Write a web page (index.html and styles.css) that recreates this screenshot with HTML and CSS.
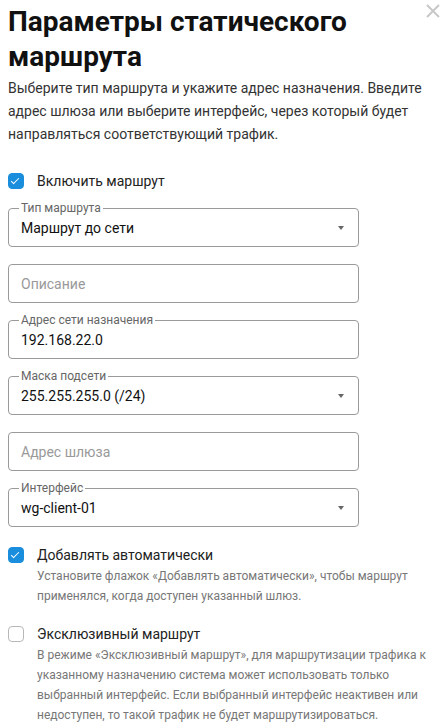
FILE: index.html
```html
<!DOCTYPE html>
<html lang="ru">
<head>
    <meta charset="UTF-8">
    <title>Параметры статического маршрута</title>
    <link rel="stylesheet" href="styles.css">
</head>

<body>
    <div class="dialog">
        <button class="close" aria-label="Закрыть">
            <svg width="14" height="14" viewBox="0 0 14 14">
                <path d="M1 1 L13 13 M13 1 L1 13" stroke="#c8c8c8" stroke-width="2" fill="none"/>
            </svg>
        </button>

        <h1>Параметры статического маршрута</h1>
        <p class="intro">Выберите тип маршрута и укажите адрес назначения. Введите адрес шлюза или выберите интерфейс, через который будет направляться соответствующий трафик.</p>

        <label class="check">
            <span class="box checked"></span>
            <span class="check-text">Включить маршрут</span>
        </label>

        <div class="fields">
            <div class="field select">
                <span class="legend">Тип маршрута</span>
                <span class="value">Маршрут до сети</span>
                <span class="arrow"></span>
            </div>
            <div class="field">
                <span class="value placeholder">Описание</span>
            </div>
            <div class="field">
                <span class="legend">Адрес сети назначения</span>
                <span class="value">192.168.22.0</span>
            </div>
            <div class="field select">
                <span class="legend">Маска подсети</span>
                <span class="value">255.255.255.0 (/24)</span>
                <span class="arrow"></span>
            </div>
            <div class="field">
                <span class="value placeholder">Адрес шлюза</span>
            </div>
            <div class="field select">
                <span class="legend">Интерфейс</span>
                <span class="value">wg-client-01</span>
                <span class="arrow"></span>
            </div>
        </div>

        <label class="check option">
            <span class="box checked"></span>
            <span class="check-body">
                <span class="check-text">Добавлять автоматически</span>
                <span class="hint">Установите флажок «Добавлять автоматически», чтобы маршрут применялся, когда доступен указанный шлюз.</span>
            </span>
        </label>

        <label class="check option">
            <span class="box"></span>
            <span class="check-body">
                <span class="check-text">Эксклюзивный маршрут</span>
                <span class="hint">В режиме «Эксклюзивный маршрут», для маршрутизации трафика к указанному назначению система может использовать только выбранный интерфейс. Если выбранный интерфейс неактивен или недоступен, то такой трафик не будет маршрутизироваться.</span>
            </span>
        </label>
    </div>
</body>
</html>
```

FILE: styles.css
```css
body {
    margin: 0;
    background: #fff;
    font-family: Roboto, 'Noto Sans', sans-serif;
    color: #222;
}

.dialog {
    position: relative;
    padding: 4px 8px 0 8px;
}

.close {
    position: absolute;
    top: 4px;
    right: 5px;
    border: none;
    background: none;
    padding: 0;
    cursor: pointer;
}

h1 {
    margin: 0;
    font-size: 28px;
    line-height: 35px;
    font-weight: 700;
    color: #111;
}

.intro {
    margin: 3px 0 0 0;
    font-size: 14px;
    line-height: 23px;
    color: #333;
}

.check {
    display: flex;
    align-items: flex-start;
    gap: 13px;
    margin-top: 27px;
}

.box {
    flex: none;
    width: 14px;
    height: 14px;
    border: 1px solid #b8b8b8;
    border-radius: 4px;
    background: #fff;
    margin-top: 0;
    position: relative;
}

.box.checked {
    background: #1a8ddd;
    border-color: #1a8ddd;
}

.box.checked::after {
    content: '';
    position: absolute;
    left: 4px;
    top: 2px;
    width: 3px;
    height: 7px;
    border: solid #fff;
    border-width: 0 1.5px 1.5px 0;
    transform: rotate(45deg);
}

.check-text {
    font-size: 14px;
    line-height: 16px;
    color: #222;
}

.check-body {
    display: flex;
    flex-direction: column;
}

.hint {
    margin-top: 3px;
    font-size: 12px;
    line-height: 20px;
    color: #777;
}

.fields {
    display: flex;
    flex-direction: column;
    gap: 17px;
    width: 351px;
    margin-top: 19px;
}

.field {
    position: relative;
    height: 37px;
    border: 1px solid #9a9a9a;
    border-radius: 4px;
    display: flex;
    align-items: center;
    padding: 0 12px;
}

.legend {
    position: absolute;
    top: -9px;
    left: 10px;
    padding: 0 2px;
    background: #fff;
    font-size: 12px;
    line-height: 16px;
    color: #666;
}

.value {
    font-size: 14px;
    color: #111;
    padding-top: 1px;
}

.placeholder {
    color: #999;
}

.arrow {
    margin-left: auto;
    margin-right: 2px;
    width: 0;
    height: 0;
    border-left: 3.5px solid transparent;
    border-right: 3.5px solid transparent;
    border-top: 4px solid #666;
}

.option {
    margin-top: 20px;
}

.option + .option {
    margin-top: 20px;
}
```
